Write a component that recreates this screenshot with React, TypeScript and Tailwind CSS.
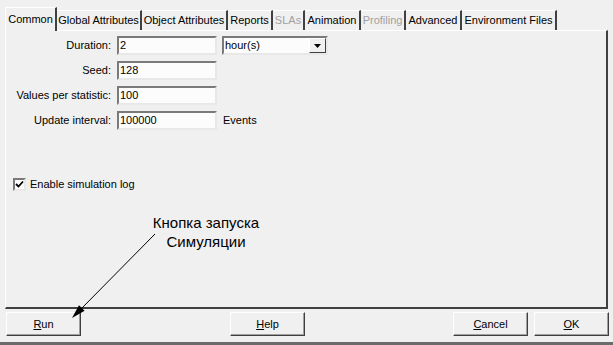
import React from 'react';

const tabs = [
  { label: 'Common', width: 'w-[52px]', active: true },
  { label: 'Global Attributes', width: 'w-[85px]' },
  { label: 'Object Attributes', width: 'w-[86px]' },
  { label: 'Reports', width: 'w-[45px]' },
  { label: 'SLAs', width: 'w-[32px]', disabled: true },
  { label: 'Animation', width: 'w-[56px]' },
  { label: 'Profiling', width: 'w-[45px]', disabled: true },
  { label: 'Advanced', width: 'w-[56px]' },
  { label: 'Environment Files', width: 'w-[95px]' },
];

const fields = [
  { label: 'Duration:', value: '2' },
  { label: 'Seed:', value: '128' },
  { label: 'Values per statistic:', value: '100' },
  { label: 'Update interval:', value: '100000' },
];

function Sunken({ children, className = '' }: { children?: React.ReactNode; className?: string }) {
  return (
    <div
      className={`border-2 border-t-[#7a7a7a] border-l-[#7a7a7a] border-r-[#e8e8e8] border-b-[#e8e8e8] bg-[#fcfcfc] flex items-center ${className}`}
    >
      {children}
    </div>
  );
}

function Button({ label, hotkey, className = '' }: { label: string; hotkey: number; className?: string }) {
  return (
    <div
      className={`h-[24px] w-[75px] flex items-center justify-center border border-t-white border-l-white border-r-[#404040] border-b-[#404040] shadow-[inset_-1px_-1px_0_#a0a0a0] ${className}`}
    >
      <span>
        {label.slice(0, hotkey)}
        <span className="underline">{label[hotkey]}</span>
        {label.slice(hotkey + 1)}
      </span>
    </div>
  );
}

export default function App() {
  return (
    <div className="relative w-[613px] h-[345px] overflow-hidden bg-[#f0f0f0] text-[11px] text-black font-['Liberation_Sans',Arial,sans-serif] border-b-[3px] border-b-[#6b6b6b]">
      {/* Tabs */}
      <div className="flex pl-[5px] pt-[7px] h-[30px] items-end">
        {tabs.map((t) =>
          t.active ? (
            <div
              key={t.label}
              className={`${t.width} h-[24px] -mb-[1px] relative z-10 bg-[#f0f0f0] flex items-center justify-center border-l border-t border-white border-r-2 border-r-[#404040]`}
            >
              {t.label}
            </div>
          ) : (
            <div
              key={t.label}
              className={`${t.width} h-[20px] flex items-center justify-center border-t border-t-white border-r-2 border-r-[#404040] ${
                t.disabled ? 'text-[#a0a0a0]' : ''
              }`}
            >
              {t.label}
            </div>
          )
        )}
      </div>

      {/* Panel */}
      <div className="ml-[5px] w-[603px] h-[279px] border border-t-white border-l-white border-r-2 border-b-2 border-r-[#404040] border-b-[#404040] pt-[5px]">
        <div className="flex flex-col gap-[6px]">
          {fields.map((f, i) => (
            <div key={f.label} className="flex items-center h-[19px]">
              <div className="w-[106px] text-right pr-[1px]">{f.label}</div>
              <Sunken className="ml-[5px] w-[100px] h-[19px] pl-[1px]">{f.value}</Sunken>
              {i === 0 && (
                <Sunken className="ml-[5px] w-[106px] h-[19px] pl-[1px] justify-between">
                  <span>hour(s)</span>
                  <div className="w-[17px] h-[15px] bg-[#f0f0f0] border border-t-white border-l-white border-r-[#404040] border-b-[#404040] flex items-center justify-center">
                    <svg width="7" height="4" viewBox="0 0 7 4">
                      <polygon points="0,0 7,0 3.5,4" fill="#000" />
                    </svg>
                  </div>
                </Sunken>
              )}
              {i === 3 && <span className="ml-[6px]">Events</span>}
            </div>
          ))}
        </div>

        <div className="flex items-center mt-[46px] ml-[7px] gap-[4px]">
          <Sunken className="w-[13px] h-[13px] justify-center">
            <svg width="9" height="9" viewBox="0 0 9 9">
              <path d="M1 4 L3.5 6.5 L8 1.5" stroke="#000" strokeWidth="1.8" fill="none" />
            </svg>
          </Sunken>
          <span>Enable simulation log</span>
        </div>
      </div>

      {/* Buttons */}
      <div className="flex mt-[3px] pl-[6px]">
        <Button label="Run" hotkey={0} />
        <Button label="Help" hotkey={0} className="ml-[149px]" />
        <Button label="Cancel" hotkey={0} className="ml-[148px]" />
        <Button label="OK" hotkey={0} className="ml-[6px]" />
      </div>

      {/* Annotation */}
      <div className="absolute left-[128px] top-[213px] w-[156px] text-center text-[15px] leading-[19px]">
        <div>Кнопка запуска</div>
        <div>Симуляции</div>
      </div>
      <svg className="absolute left-0 top-0 pointer-events-none" width="613" height="345">
        <line x1="155" y1="234" x2="80" y2="310" stroke="#000" strokeWidth="1" />
        <polygon points="72,318 84.6,310.8 79,305.2" fill="#000" />
      </svg>
    </div>
  );
}
